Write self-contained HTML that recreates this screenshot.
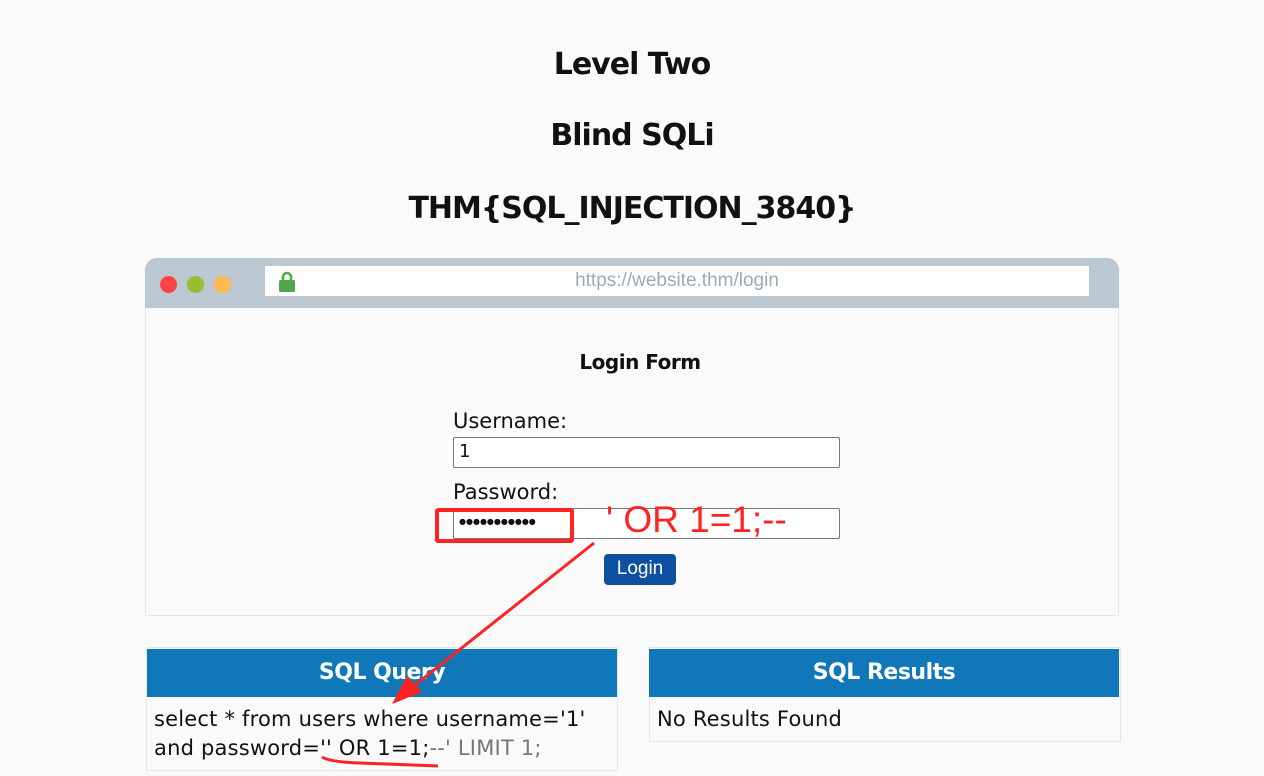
<!DOCTYPE html>
<html><head><style>
body{margin:0;width:1264px;height:776px;background:#fafafa;font-family:"DejaVu Sans","Liberation Sans",sans-serif;position:relative;overflow:hidden;color:#111}
.a{position:absolute}
h1{position:absolute;left:0;width:1264px;text-align:center;margin:0;font-weight:bold;font-size:30px;letter-spacing:-1px}
.in{position:absolute;background:#fff;border:1px solid #777;border-radius:2px;box-sizing:border-box}
</style></head><body>
<h1 style="top:47px">Level Two</h1>
<h1 style="top:118px">Blind SQLi</h1>
<h1 style="top:191px">THM{SQL_INJECTION_3840}</h1>
<div class="a" style="left:145px;top:258px;width:974px;height:50px;background:#bbc7d1;border-radius:12px 12px 0 0"></div>
<div class="a" style="left:160px;top:276px;width:17px;height:17px;border-radius:50%;background:#fd4346"></div>
<div class="a" style="left:187px;top:276px;width:17px;height:17px;border-radius:50%;background:#99bd32"></div>
<div class="a" style="left:214px;top:276px;width:17px;height:17px;border-radius:50%;background:#ffb952"></div>
<div class="a" style="left:265px;top:266px;width:824px;height:30px;background:#fff"></div>
<svg class="a" style="left:277px;top:270px" width="20" height="24"><path d="M6 10V7a4 4 0 0 1 8 0v3" stroke="#4fa64f" stroke-width="2.5" fill="none"/><rect x="2" y="10" width="16" height="12" rx="1.5" fill="#4fa64f"/></svg>
<div class="a" style="left:265px;top:270px;width:824px;text-align:center;font-family:'Liberation Sans',sans-serif;font-size:19px;color:#9aaabb">https://website.thm/login</div>
<div class="a" style="left:145px;top:308px;width:972px;height:307px;border:1px solid #e6e6e6;border-top:none;background:#fafafa"></div>
<div class="a" style="left:145px;top:350px;width:990px;text-align:center;font-size:20px;font-weight:bold;letter-spacing:-0.5px">Login Form</div>
<div class="a" style="left:453px;top:409px;font-size:21px">Username:</div>
<div class="in" style="left:453px;top:437px;width:387px;height:31px;font-size:18px;padding:3px 5px">1</div>
<div class="a" style="left:453px;top:480px;font-size:21px">Password:</div>
<div class="in" style="left:453px;top:508px;width:387px;height:31px;font-size:8px;padding:8px 5px;letter-spacing:0px">●●●●●●●●●●●</div>
<div class="a" style="left:604px;top:554px;width:72px;height:31px;background:#0d4fa0;border-radius:4px;color:#fff;font-size:19px;text-align:center;line-height:30px;font-family:'Liberation Sans',sans-serif">Login</div>
<div class="a" style="left:146px;top:647px;width:470px;height:122px;border:1px solid #e6e6e6;background:#fafafa"></div>
<div class="a" style="left:147px;top:649px;width:470px;height:48px;background:#1078b8;color:#fff;font-weight:bold;font-size:22px;text-align:center;line-height:48px;letter-spacing:-0.5px">SQL Query</div>
<div class="a" style="left:154px;top:705px;font-size:21px;line-height:29px;white-space:nowrap;letter-spacing:0.2px">select * from users where username='1'<br>and password='' OR 1=1;<span style="color:#777">--' LIMIT 1;</span></div>
<div class="a" style="left:649px;top:647px;width:470px;height:93px;border:1px solid #e6e6e6;background:#fafafa"></div>
<div class="a" style="left:649px;top:649px;width:470px;height:48px;background:#1078b8;color:#fff;font-weight:bold;font-size:22px;text-align:center;line-height:48px;letter-spacing:-0.5px">SQL Results</div>
<div class="a" style="left:657px;top:705px;font-size:21px;line-height:29px;letter-spacing:0.2px">No Results Found</div>
<div class="a" style="left:435px;top:508px;width:131px;height:27px;border:4px solid #f22;border-radius:3px"></div>
<div class="a" style="left:606px;top:499px;font-size:37px;color:#f22;font-family:'Liberation Sans',sans-serif">' OR 1=1;--</div>
<svg class="a" style="left:0;top:0" width="1264" height="776"><line x1="594" y1="543" x2="405" y2="693" stroke="#f22" stroke-width="3"/><polygon points="392,704 407,676 422,692" fill="#f22"/><path d="M322 757 Q330 762 360 763 T438 766" stroke="#f22" stroke-width="3" fill="none"/></svg>
</body></html>
